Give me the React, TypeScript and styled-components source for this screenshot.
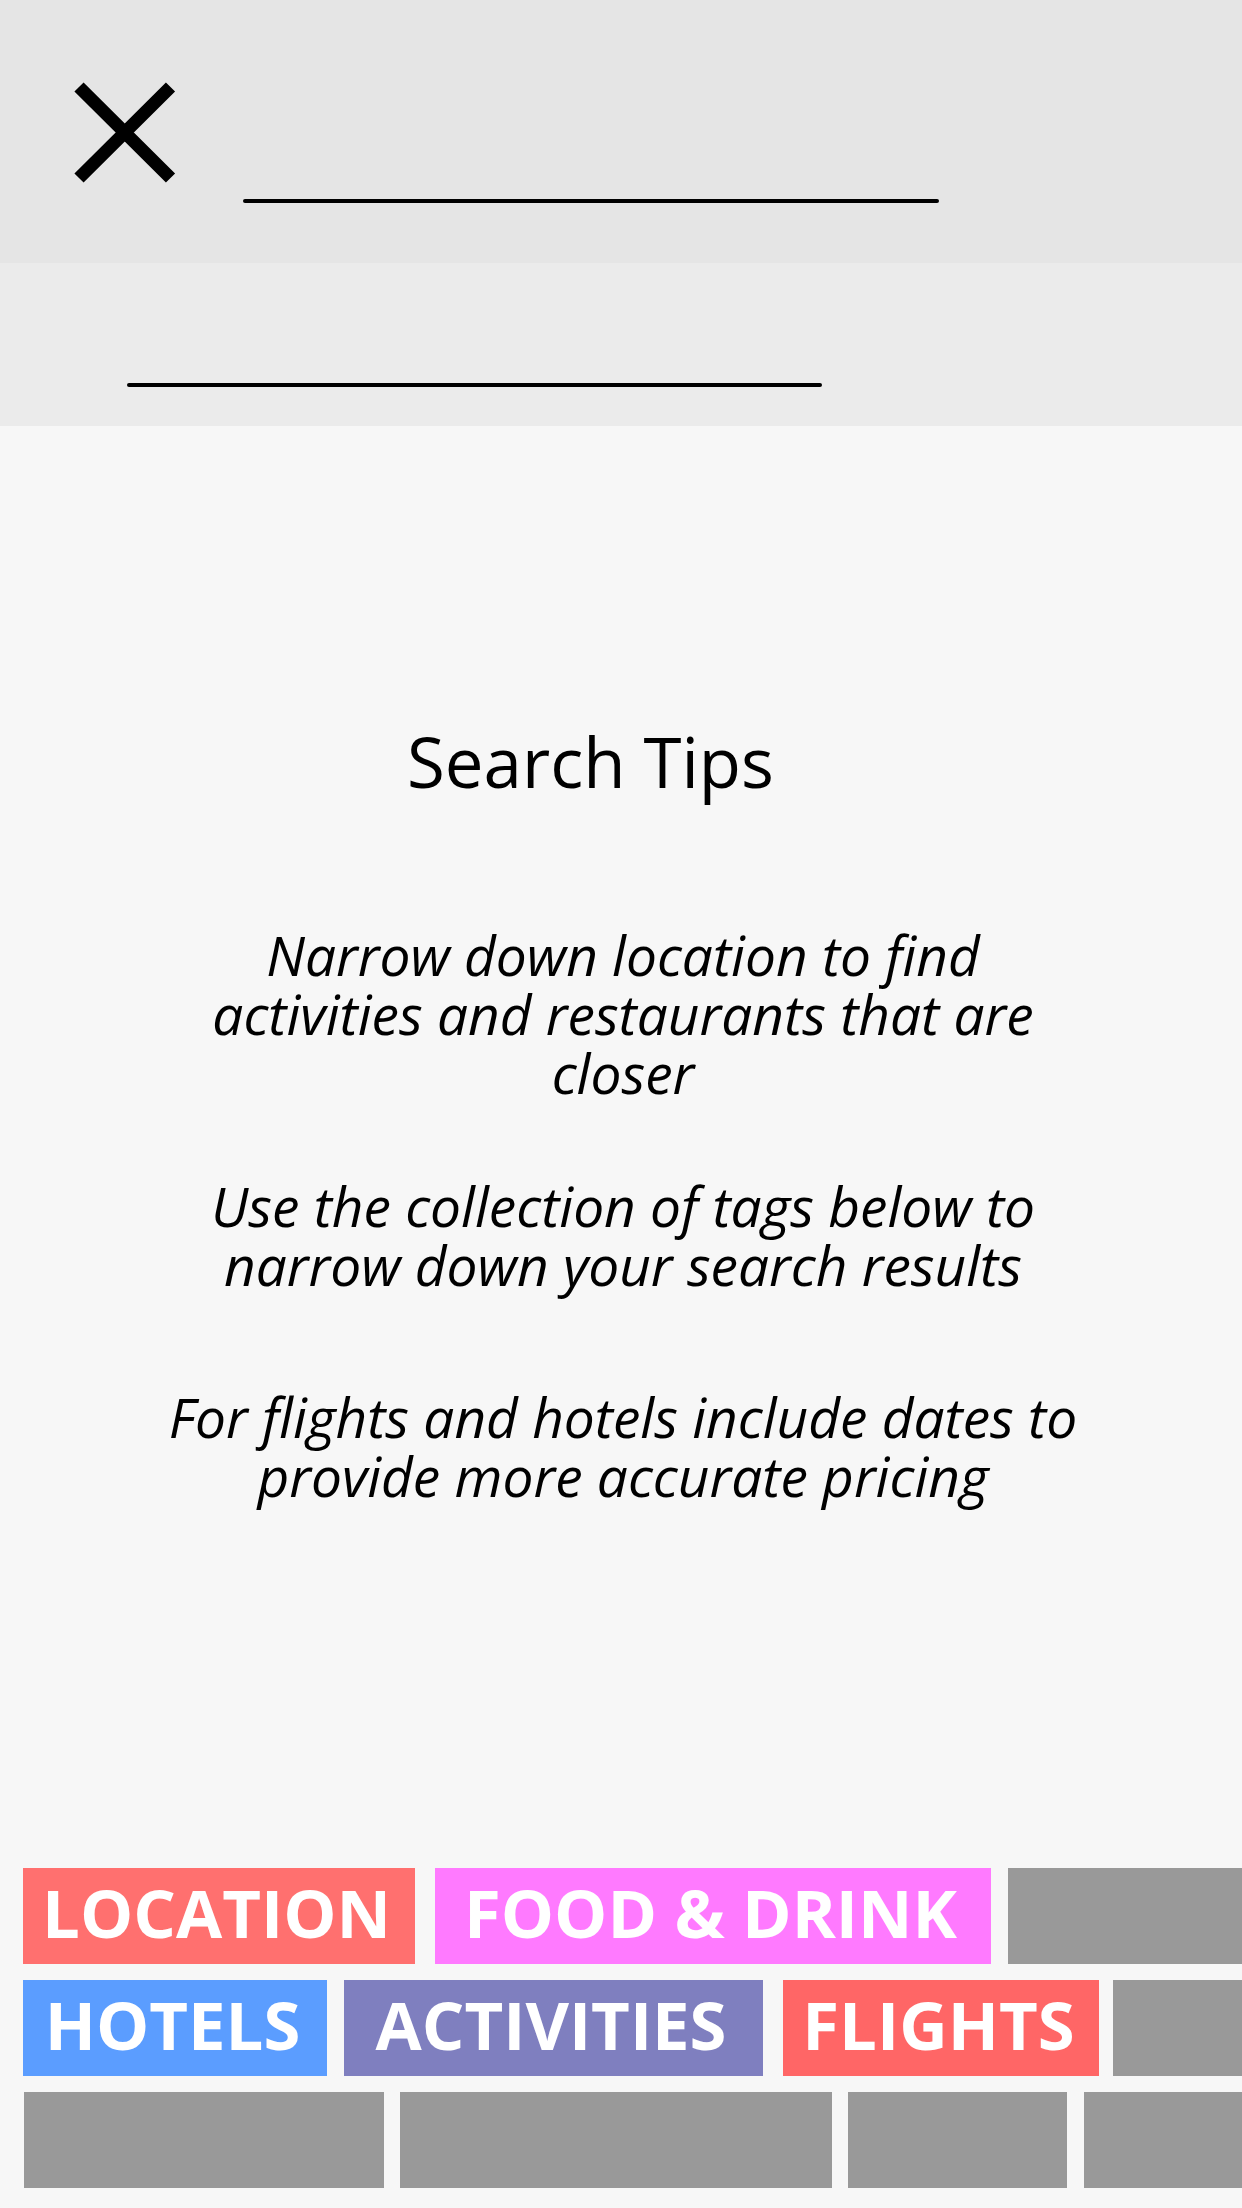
import React from 'react';
import styled, { createGlobalStyle } from 'styled-components';

const GlobalStyle = createGlobalStyle`
  html, body {
    margin: 0;
    padding: 0;
    background: #f7f7f7;
  }
  body {
    font-family: "Open Sans", "Noto Sans", sans-serif;
    color: #000;
  }
`;

type TagData = {
  label?: string;
  color: string;
  width: number;
  ml: number;
};

const rows: TagData[][] = [
  [
    { label: 'LOCATION', color: '#ff706f', width: 392, ml: 0 },
    { label: 'FOOD & DRINK', color: '#ff7aff', width: 556, ml: 20 },
    { color: '#999999', width: 300, ml: 17 },
  ],
  [
    { label: 'HOTELS', color: '#5b9dff', width: 304, ml: 0 },
    { label: 'ACTIVITIES', color: '#7f7fbf', width: 419, ml: 17 },
    { label: 'FLIGHTS', color: '#ff6666', width: 316, ml: 20 },
    { color: '#999999', width: 300, ml: 14 },
  ],
  [
    { color: '#999999', width: 360, ml: 1 },
    { color: '#999999', width: 432, ml: 16 },
    { color: '#999999', width: 219, ml: 16 },
    { color: '#999999', width: 300, ml: 17 },
  ],
];

const tips: string[][] = [
  ['Narrow down location to find', 'activities and restaurants that are', 'closer'],
  ['Use the collection of tags below to', 'narrow down your search results'],
  ['For flights and hotels include dates to', 'provide more accurate pricing'],
];

const Page = styled.div`
  min-height: 100vh;
  display: flex;
  flex-direction: column;
  overflow: hidden;
`;

const TopBar = styled.div`
  height: 263px;
  box-sizing: border-box;
  background: #e5e5e5;
  display: flex;
  align-items: flex-start;
  padding: 82px 0 0 74px;
`;

const CloseButton = styled.button`
  width: 102px;
  height: 102px;
  padding: 0;
  border: 0;
  background: none;
  display: block;
  cursor: pointer;
`;

const Underline = styled.div<{ $width: number }>`
  width: ${(p) => p.$width}px;
  height: 4px;
  border-radius: 2px;
  background: #000;
`;

const QueryLine = styled(Underline)`
  margin: 117px 0 0 67px;
`;

const LocationBar = styled.div`
  height: 163px;
  box-sizing: border-box;
  background: #ebebeb;
  padding: 120px 0 0 127px;
`;

const Content = styled.main`
  flex: 1;
  display: flex;
  flex-direction: column;
  align-items: center;
  padding-top: 301px;
`;

const Title = styled.h1`
  margin: 0 61px 0 0;
  font-size: 69px;
  line-height: 69px;
  font-weight: 400;
  white-space: nowrap;
`;

const Tip = styled.p<{ $gap: number }>`
  margin: ${(p) => p.$gap}px 0 0 4px;
  font-size: 55px;
  line-height: 59px;
  font-style: italic;
  text-align: center;
  white-space: nowrap;
`;

const Spacer = styled.div`
  flex: 1;
`;

const TagArea = styled.div`
  align-self: stretch;
  display: flex;
  flex-direction: column;
  gap: 16px;
  padding: 0 0 20px 23px;
`;

const TagRow = styled.div`
  display: flex;
  flex-wrap: nowrap;
`;

const Tag = styled.div<{ $color: string; $width: number; $ml: number }>`
  flex: none;
  box-sizing: border-box;
  width: ${(p) => p.$width}px;
  height: 96px;
  margin-left: ${(p) => p.$ml}px;
  padding: 0 5px 8px 0;
  background: ${(p) => p.$color};
  color: #fff;
  font-size: 67px;
  line-height: 88px;
  font-weight: 700;
  text-align: center;
  white-space: nowrap;
`;

const tipGaps = [129, 74, 93];

export default function App() {
  return (
    <>
      <GlobalStyle />
      <Page>
        <TopBar>
          <CloseButton aria-label="Close">
            <svg width="102" height="102" viewBox="0 0 102 102">
              <path d="M5 5 L96.5 96 M96.5 5 L5 96" stroke="#000" strokeWidth="13" fill="none" />
            </svg>
          </CloseButton>
          <QueryLine $width={696} />
        </TopBar>
        <LocationBar>
          <Underline $width={695} />
        </LocationBar>
        <Content>
          <Title>Search Tips</Title>
          {tips.map((lines, i) => (
            <Tip key={i} $gap={tipGaps[i]}>
              {lines.map((l, j) => (
                <React.Fragment key={j}>
                  {j > 0 && <br />}
                  {l}
                </React.Fragment>
              ))}
            </Tip>
          ))}
          <Spacer />
          <TagArea>
            {rows.map((row, i) => (
              <TagRow key={i}>
                {row.map((t, j) => (
                  <Tag key={j} $color={t.color} $width={t.width} $ml={t.ml}>
                    {t.label}
                  </Tag>
                ))}
              </TagRow>
            ))}
          </TagArea>
        </Content>
      </Page>
    </>
  );
}
